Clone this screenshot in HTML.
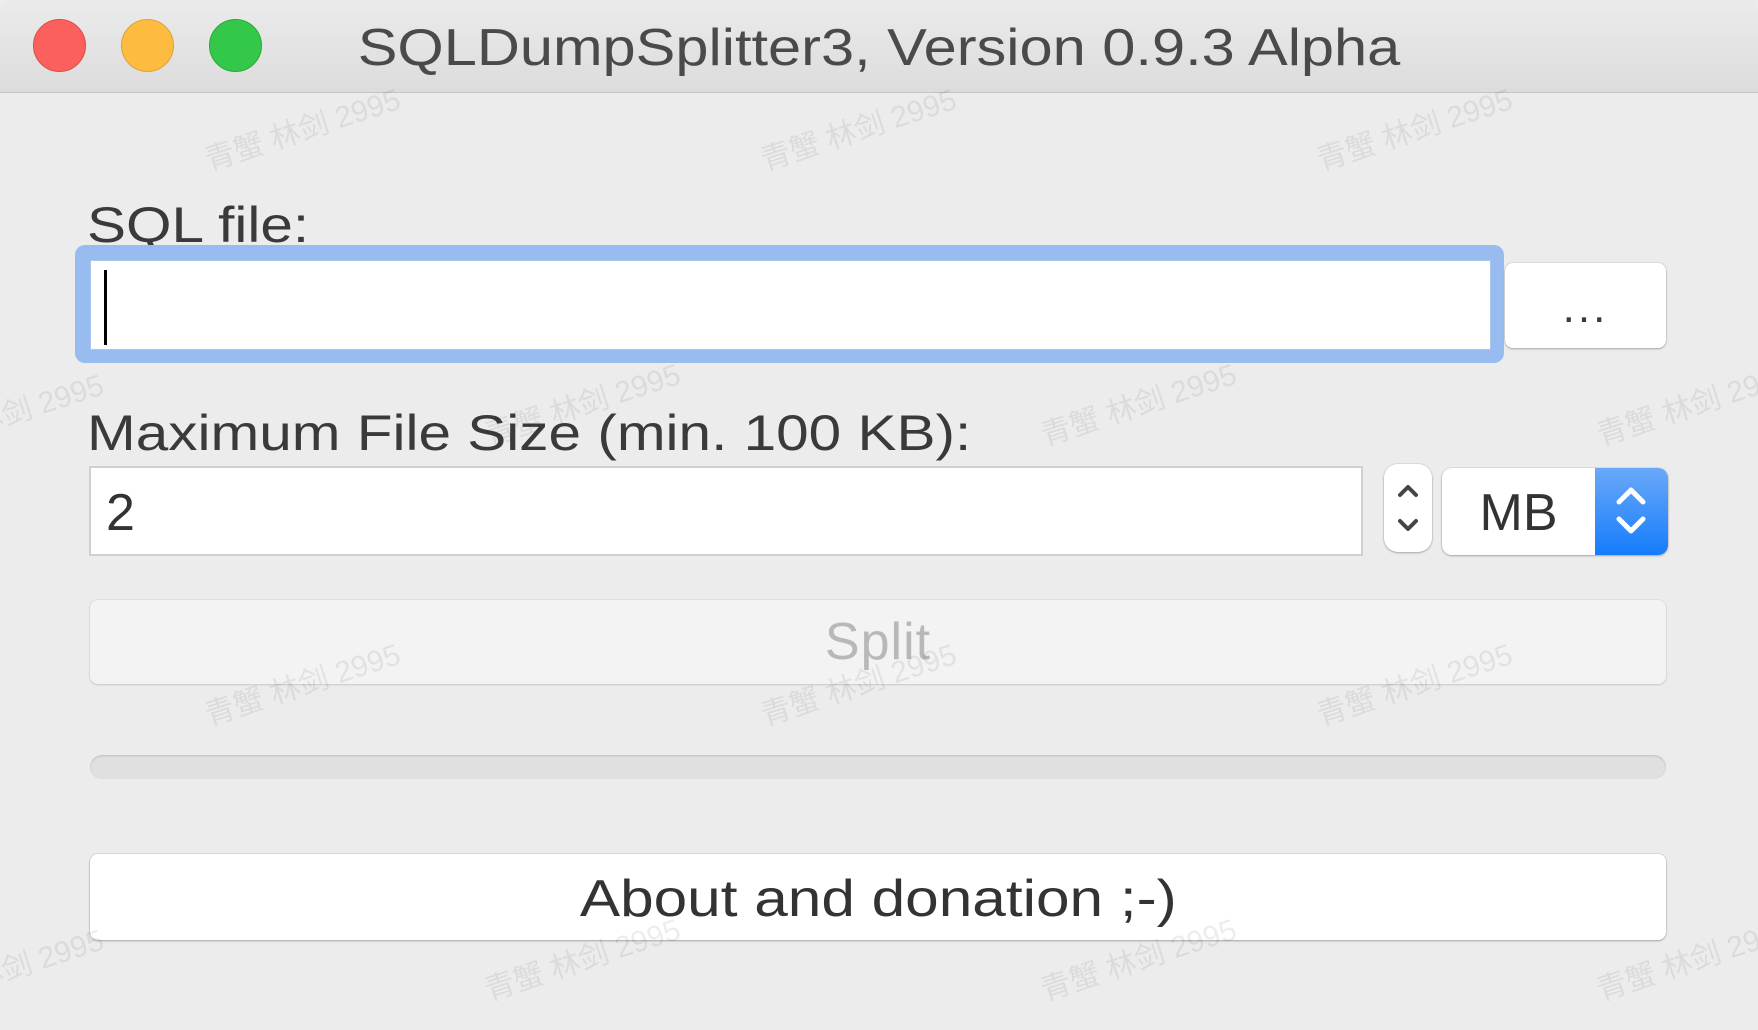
<!DOCTYPE html>
<html><head><meta charset="utf-8"><style>
body{margin:0;width:1758px;height:1030px;background:#ececec;font-family:"Liberation Sans","Noto Sans CJK SC",sans-serif;overflow:hidden;position:relative;color:#3a3a3a}
.tb{position:absolute;left:0;top:0;width:1758px;height:92px;background:linear-gradient(#ebebeb,#dcdcdc);border-bottom:1px solid #c4c4c4;border-radius:12px 12px 0 0}
.dot{position:absolute;top:19px;width:53px;height:53px;border-radius:50%}
.title{position:absolute;left:0;width:1758px;top:18px;text-align:center;font-size:52px;color:#4a4a4a;transform:scaleX(1.145)}
.lbl{position:absolute;left:87px;font-size:50px;color:#3a3a3a;transform:scaleX(1.17);transform-origin:0 0;white-space:nowrap}
.box{position:absolute;background:#fff;box-sizing:border-box}
.btn{position:absolute;background:#fff;border-radius:8px;box-shadow:0 1px 2px rgba(0,0,0,.25),0 0 0 1px rgba(0,0,0,.06);text-align:center;box-sizing:border-box}
.wm{position:absolute;font-size:30px;color:rgba(0,0,0,.07);transform:rotate(-18deg);white-space:nowrap}
</style></head><body>
<div class="tb">
<div class="dot" style="left:33px;background:#fc605c;border:1px solid #de4b46;box-sizing:border-box"></div>
<div class="dot" style="left:121px;background:#fdbc40;border:1px solid #dea236;box-sizing:border-box"></div>
<div class="dot" style="left:209px;background:#34c84a;border:1px solid #27aa35;box-sizing:border-box"></div>
<div class="title">SQLDumpSplitter3, Version 0.9.3 Alpha</div>
</div>
<div class="lbl" style="top:196px">SQL file:</div>
<div style="position:absolute;left:75px;top:245px;width:1429px;height:118px;background:#98bcf0;border-radius:10px"></div>
<div class="box" style="left:90px;top:260px;width:1401px;height:90px;border:1px solid #a9c5ee"></div>
<div style="position:absolute;left:104px;top:270px;width:3px;height:75px;background:#000"></div>
<div class="btn" style="left:1505px;top:263px;width:161px;height:85px;font-size:44px;line-height:90px;letter-spacing:3px">...</div>
<div class="lbl" style="top:404px">Maximum File Size (min. 100 KB):</div>
<div class="box" style="left:89px;top:466px;width:1274px;height:90px;border:2px solid #d0d0d0;font-size:52px;line-height:90px;padding-left:15px;color:#333">2</div>
<div class="btn" style="left:1384px;top:464px;width:48px;height:88px;border-radius:14px">
<svg width="48" height="88" viewBox="0 0 48 88"><path d="M16 31 L24 23 L32 31 M16 57 L24 65 L32 57" fill="none" stroke="#444" stroke-width="4" stroke-linecap="round" stroke-linejoin="round"/></svg></div>
<div class="btn" style="left:1442px;top:468px;width:226px;height:87px;overflow:hidden;border-radius:10px">
<div style="position:absolute;left:0;top:0;width:153px;height:87px;font-size:52px;line-height:90px;color:#333">MB</div>
<div style="position:absolute;left:153px;top:0;width:73px;height:87px;background:linear-gradient(#6aa9fa,#157cfb)">
<svg width="73" height="87" viewBox="0 0 73 87"><path d="M24 34 L36 22 L48 34 M24 51 L36 63 L48 51" fill="none" stroke="#fff" stroke-width="5" stroke-linecap="round" stroke-linejoin="round"/></svg></div></div>
<div class="btn" style="left:90px;top:600px;width:1576px;height:84px;background:#f3f3f3;box-shadow:0 1px 2px rgba(0,0,0,.12),0 0 0 1px rgba(0,0,0,.04);font-size:52px;line-height:84px;color:#b8b8b8;letter-spacing:1px">Split</div>
<div style="position:absolute;left:90px;top:755px;width:1576px;height:24px;background:#e0e0e0;border-radius:12px;box-shadow:inset 0 1px 2px rgba(0,0,0,.15)"></div>
<div class="btn" style="left:90px;top:854px;width:1576px;height:86px;font-size:52px;line-height:90px;color:#333"><span style="display:inline-block;transform:scaleX(1.16)">About and donation ;-)</span></div>
<div class="wm" style="left:200px;top:105px">青蟹 林剑 2995</div>
<div class="wm" style="left:756px;top:105px">青蟹 林剑 2995</div>
<div class="wm" style="left:1312px;top:105px">青蟹 林剑 2995</div>
<div class="wm" style="left:-30px;top:380px">林剑 2995</div>
<div class="wm" style="left:480px;top:380px">青蟹 林剑 2995</div>
<div class="wm" style="left:1036px;top:380px">青蟹 林剑 2995</div>
<div class="wm" style="left:1592px;top:380px">青蟹 林剑 2995</div>
<div class="wm" style="left:200px;top:660px">青蟹 林剑 2995</div>
<div class="wm" style="left:756px;top:660px">青蟹 林剑 2995</div>
<div class="wm" style="left:1312px;top:660px">青蟹 林剑 2995</div>
<div class="wm" style="left:-30px;top:935px">林剑 2995</div>
<div class="wm" style="left:480px;top:935px">青蟹 林剑 2995</div>
<div class="wm" style="left:1036px;top:935px">青蟹 林剑 2995</div>
<div class="wm" style="left:1592px;top:935px">青蟹 林剑 2995</div>
</body></html>
